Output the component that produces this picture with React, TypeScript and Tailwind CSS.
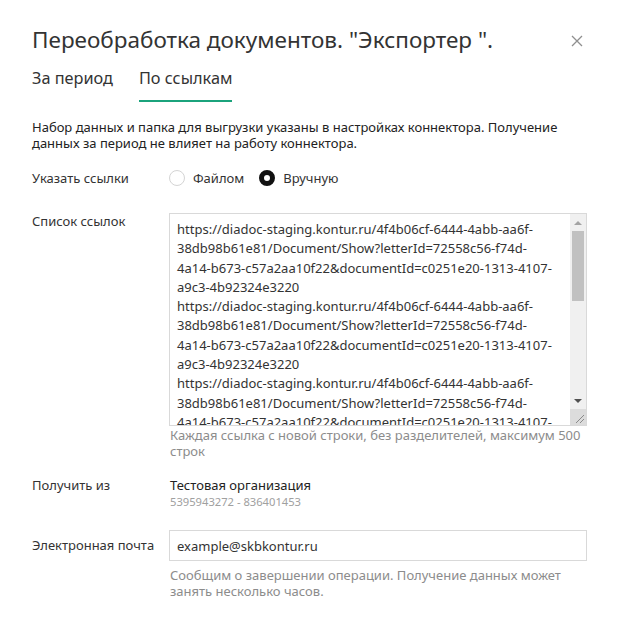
import React, { useState } from 'react'

const linkLines = [
  'https://diadoc-staging.kontur.ru/4f4b06cf-6444-4abb-aa6f-',
  '38db98b61e81/Document/Show?letterId=72558c56-f74d-',
  '4a14-b673-c57a2aa10f22&documentId=c0251e20-1313-4107-',
  'a9c3-4b92324e3220',
]

function Radio({ checked, label, onClick }: { checked: boolean; label: string; onClick: () => void }) {
  return (
    <button type="button" onClick={onClick} className="flex items-center gap-[8px] text-[#333]">
      <span
        className={`box-border inline-block h-[16px] w-[16px] rounded-full ${
          checked ? 'border-[5px] border-[#111] bg-white' : 'border border-[#d4d4d4] bg-white'
        }`}
      />
      <span>{label}</span>
    </button>
  )
}

function LinksBox() {
  const lines = [...linkLines, ...linkLines, ...linkLines]
  return (
    <div className="relative h-[213px] w-[418px] overflow-hidden border border-[#d9d9d9] bg-white">
      <div className="pl-[7px] pr-[20px] pt-[6px] leading-[19.3px] text-[#333] whitespace-pre">
        {lines.map((l, i) => (
          <div key={i}>{l}</div>
        ))}
      </div>
      {/* scrollbar */}
      <div className="absolute right-0 top-0 flex h-full w-[16px] flex-col bg-[#f0f0f0]">
        <div className="flex h-[16px] items-center justify-center">
          <svg width="8" height="5" viewBox="0 0 8 5">
            <path d="M0 5 L4 1 L8 5 Z" fill="#a3a3a3" />
          </svg>
        </div>
        <div className="mx-[2px] mt-[1px] h-[70px] bg-[#c1c1c1]" />
        <div className="flex-1" />
        <div className="flex h-[16px] items-center justify-center">
          <svg width="8" height="5" viewBox="0 0 8 5">
            <path d="M0 0 L4 4 L8 0 Z" fill="#505050" />
          </svg>
        </div>
        <div className="flex h-[16px] items-end justify-end bg-[#dcdcdc] pb-[2px] pr-[2px]">
          <svg width="9" height="9" viewBox="0 0 9 9">
            <path d="M9 1 L1 9 M9 5 L5 9" stroke="#8a8a8a" strokeWidth="1" />
          </svg>
        </div>
      </div>
    </div>
  )
}

export default function App() {
  const [tab, setTab] = useState<'period' | 'links'>('links')
  const [mode, setMode] = useState<'file' | 'manual'>('manual')

  return (
    <div className="min-h-[638px] bg-white pl-[32px] pr-[30px] text-[13px]" style={{ fontFamily: '"Noto Sans", sans-serif' }}>
      <div className="flex items-start justify-between pt-[24px]">
        <h1 className="text-[22.5px] font-normal leading-[32px] text-[#333]">Переобработка документов. "Экспортер ".</h1>
        <button type="button" className="mr-[3px] flex h-[34px] w-[14px] items-center justify-center">
          <svg width="12" height="12" viewBox="0 0 12 12">
            <path d="M1 1 L11 11 M11 1 L1 11" stroke="#8f8f8f" strokeWidth="1.3" />
          </svg>
        </button>
      </div>

      <div className="mt-[8px] flex gap-[26px] text-[16.3px] text-[#333]">
        <button
          type="button"
          onClick={() => setTab('period')}
          className={`border-b-2 pb-[10px] leading-[24px] ${tab === 'period' ? 'border-[#1ba37c]' : 'border-transparent'}`}
        >
          За период
        </button>
        <button
          type="button"
          onClick={() => setTab('links')}
          className={`border-b-2 pb-[10px] leading-[24px] ${tab === 'links' ? 'border-[#1ba37c]' : 'border-transparent'}`}
        >
          По ссылкам
        </button>
      </div>

      <p className="mt-[17px] leading-[16px] text-[#222]">
        Набор данных и папка для выгрузки указаны в настройках коннектора. Получение данных за период не влияет на работу коннектора.
      </p>

      <div className="mt-[17px] grid grid-cols-[137px_418px] leading-[16px] text-[#333]">
        <div className="leading-[20px]">Указать ссылки</div>
        <div className="flex h-[20px] items-center gap-[15px]">
          <Radio checked={mode === 'file'} label="Файлом" onClick={() => setMode('file')} />
          <Radio checked={mode === 'manual'} label="Вручную" onClick={() => setMode('manual')} />
        </div>

        <div className="mt-[25px]">Список ссылок</div>
        <div className="mt-[25px]">
          <LinksBox />
          <div className="mt-[1px] pl-[1px] text-[#8c8c8c]">Каждая ссылка с новой строки, без разделителей, максимум 500 строк</div>
        </div>

        <div className="mt-[18px]">Получить из</div>
        <div className="mt-[18px] pl-[1px]">
          <div className="text-[#222]">Тестовая организация</div>
          <div className="text-[11.2px] leading-[18px] text-[#a0a0a0]">5395943272 - 836401453</div>
        </div>

        <div className="mt-[19px] leading-[31px]">Электронная почта</div>
        <div className="mt-[19px]">
          <input
            readOnly
            value="example@skbkontur.ru"
            className="box-border h-[31px] w-[418px] border border-[#d9d9d9] px-[7px] text-[#333] outline-none"
          />
          <div className="mt-[6px] pl-[1px] text-[#8c8c8c]">Сообщим о завершении операции. Получение данных может занять несколько часов.</div>
        </div>
      </div>
    </div>
  )
}
